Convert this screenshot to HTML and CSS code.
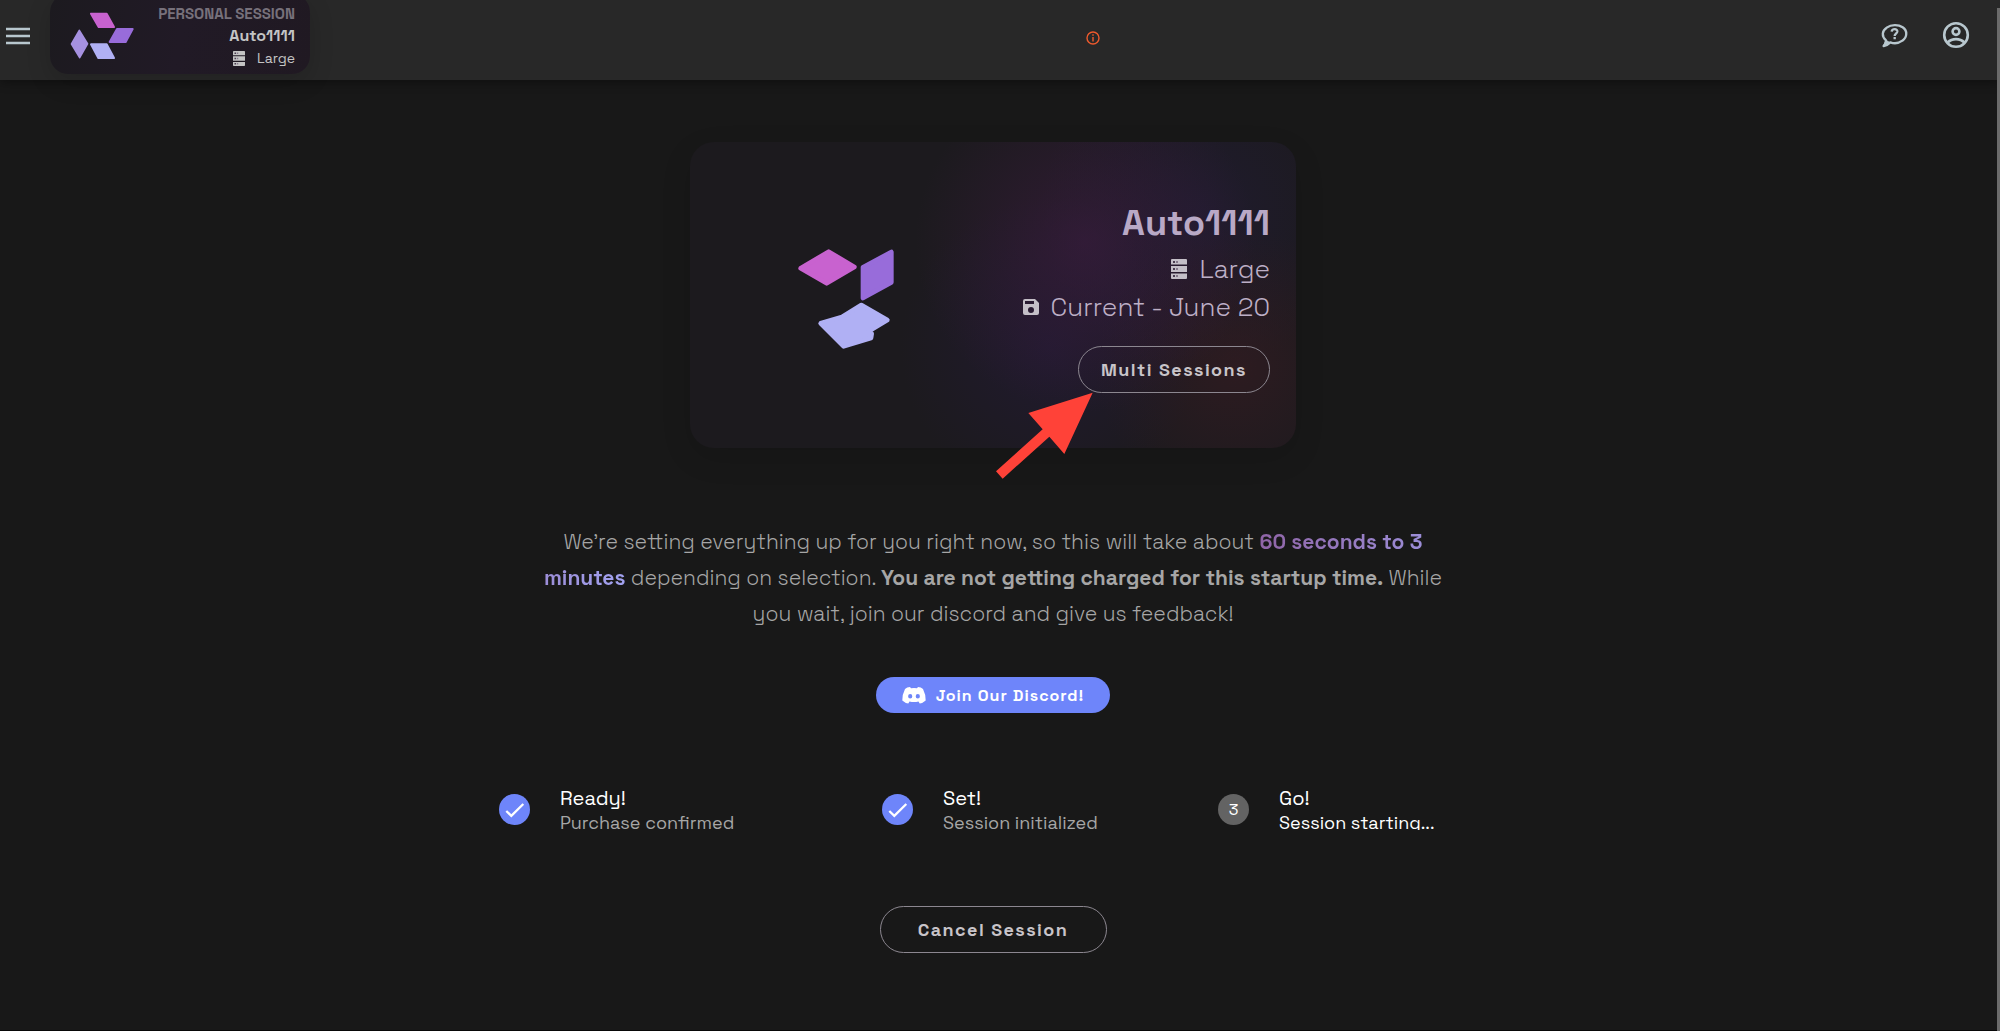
FILE: index.html
```html
<!DOCTYPE html>
<html lang="en">
<head>
<meta charset="utf-8">
<title>Session starting</title>
<link rel="stylesheet" href="styles.css">
</head>
<body>
<svg class="symbols" aria-hidden="true">
  <symbol id="server" viewBox="0 0 16 20">
    <path fill="currentColor" d="M1 0h14a1 1 0 0 1 1 1v4.500H0V1a1 1 0 0 1 1-1zM0 7h16v6H0zM0 14.500h16V19a1 1 0 0 1-1 1H1a1 1 0 0 1-1-1z"/>
    <path fill="#4a3d50" d="M2 2h2v2H2zM2 9h2v2H2zM2 16h2v2H2z"/>
    <path fill="#85798a" d="M5 2h2v2H5zM5 9h2v2H5zM5 16h2v2H5z"/>
  </symbol>
  <symbol id="check" viewBox="0 0 31 31">
    <circle cx="15.500" cy="15.500" r="15.500" fill="#6e85fa"/>
    <path d="M7.300 17l5 4.800L24.300 10" fill="none" stroke="#fff" stroke-width="2.300"/>
  </symbol>
</svg>

<header class="topbar">
  <div class="topbar-start">
    <button class="icon-button" type="button" aria-label="Menu">
      <svg width="24" height="18" viewBox="0 0 24 18"><path d="M0 2h24M0 9h24M0 16h24" stroke="#b8c7ce" stroke-width="2.600"/></svg>
    </button>
    <section class="session-chip">
      <svg class="chip-logo" width="65" height="48" viewBox="210 36 195 144" stroke-width="6" stroke-linejoin="round">
        <path d="M273 41H320L342 81H296Z" fill="#c862cf" stroke="#c862cf"/>
        <path d="M351 87H398L377 126H329Z" fill="#986cda" stroke="#986cda"/>
        <path d="M273 133H320L342 174H295Z" fill="#b0b0f4" stroke="#b0b0f4"/>
        <path d="M238 92L262 131L239 172L215 132Z" fill="#a691e0" stroke="#a691e0"/>
      </svg>
      <div class="chip-text">
        <span class="chip-label">PERSONAL SESSION</span>
        <strong class="chip-name">Auto1111</strong>
        <span class="chip-size"><svg width="12" height="15"><use href="#server"/></svg>Large</span>
      </div>
    </section>
  </div>
  <button class="icon-button notice-button" type="button" aria-label="Session notice">
    <svg width="14" height="14" viewBox="0 0 14 14"><circle cx="7" cy="7" r="6" fill="none" stroke="#ee5a2d" stroke-width="1.400"/><path d="M7 3.200v1.500M7 6v4.600" stroke="#ee5a2d" stroke-width="1.400"/></svg>
  </button>
  <div class="topbar-end">
    <button class="icon-button" type="button" aria-label="Help">
      <svg width="28" height="26" viewBox="63 66 84 78" fill="none" stroke="#b8c7ce">
        <path d="M78 121C64 109 66 92 80 83C94 73 115 73 128 82C143 92 142 112 127 122C116 130 101 131 91 127C86 132 80 136 71 138C77 133 80 127 78 121Z" stroke-width="7" stroke-linejoin="round"/>
        <path d="M77 121L90 128L70 139Z" fill="#b8c7ce" stroke-width="3"/>
        <path d="M95 95C96 85 113 85 112 95C111 101 104 101 104 108M104 111V118" stroke-width="7"/>
      </svg>
    </button>
    <button class="icon-button" type="button" aria-label="Account">
      <svg width="28" height="28" viewBox="0 0 28 28" fill="none" stroke="#b8c7ce" stroke-width="2.600"><circle cx="14" cy="14" r="11.800"/><circle cx="14" cy="10.500" r="3.400"/><path d="M5.700 21.500C10 17 18 17 22.300 21.500"/></svg>
    </button>
  </div>
</header>

<main class="content">
  <section class="session-card">
    <div class="card-art">
      <svg width="97" height="102" viewBox="354 354 291 306" stroke-width="14" stroke-linejoin="round">
        <path d="M446 365L523 411L440 460L362 415Z" fill="#c862cf" stroke="#c862cf"/>
        <path d="M634 366V457L549 504V412Z" fill="#986cda" stroke="#986cda"/>
        <path d="M544 525L622 570L566 604L575 611L573 624L491 649L422 580L486 561Z" fill="#b0b0f4" stroke="#b0b0f4"/>
      </svg>
    </div>
    <div class="card-text">
      <h1 class="card-title">Auto1111</h1>
      <p class="card-line"><svg width="16" height="20"><use href="#server"/></svg>Large</p>
      <p class="card-line"><svg width="16" height="16" viewBox="0 0 16 16"><path fill="currentColor" fill-rule="evenodd" d="M2 0h10l4 4v10a2 2 0 0 1-2 2H2a2 2 0 0 1-2-2V2a2 2 0 0 1 2-2zM2 2v3h9V2zM8 8a3 3 0 1 0 0 6a3 3 0 0 0 0-6z"/></svg>Current - June 20</p>
      <button class="outline-button" type="button">Multi Sessions</button>
    </div>
    <svg class="pointer-arrow" width="100" height="90" viewBox="0 0 300 270" aria-hidden="true"><path fill="#ff4238" d="M296 8L103 69L146 118L6 244L26 266L166 140L211 192Z"/></svg>
  </section>

  <p class="message">We’re setting everything up for you right now, so this will take about <strong class="duration">60 seconds to 3 minutes</strong> depending on selection. <strong>You are not getting charged for this startup time.</strong> While you wait, join our discord and give us feedback!</p>

  <a class="discord-button" href="#discord">
    <svg width="24" height="18" viewBox="0 0 24 18"><path fill="#fff" fill-rule="evenodd" d="M8 1L9 2.200Q12 1.600 15 2.200L16 1Q19 1.200 21 3Q24 9 23.700 14.500Q21 17 17.700 17.500L16.500 15.500Q12 16.600 7.500 15.500L6.300 17.500Q3 17 .3 14.500Q0 9 3 3Q5 1.200 8 1ZM8.200 8a2.100 2.300 0 1 0 0 4.600a2.100 2.300 0 0 0 0-4.600zM15.800 8a2.100 2.300 0 1 0 0 4.600a2.100 2.300 0 0 0 0-4.600z"/></svg>
    Join Our Discord!
  </a>

  <ol class="steps">
    <li class="step">
      <svg width="31" height="31"><use href="#check"/></svg>
      <div class="step-text"><h2 class="step-title">Ready!</h2><p class="step-note">Purchase confirmed</p></div>
    </li>
    <li class="step">
      <svg width="31" height="31"><use href="#check"/></svg>
      <div class="step-text"><h2 class="step-title">Set!</h2><p class="step-note">Session initialized</p></div>
    </li>
    <li class="step">
      <span class="step-number">3</span>
      <div class="step-text"><h2 class="step-title">Go!</h2><p class="step-note step-note-active">Session starting...</p></div>
    </li>
  </ol>

  <button class="outline-button cancel-button" type="button">Cancel Session</button>
</main>
<div class="scroll-thumb"></div>
</body>
</html>
```
FILE: styles.css
```css
* {
  box-sizing: border-box;
}

body {
  margin: 0;
  min-height: 100vh;
  background: #181818;
  border-bottom: 1px solid #080808;
  color: #c4c4c4;
  font-family: "Space Grotesk", Inter, "Liberation Sans", sans-serif;
}

h1, h2, p, ol {
  margin: 0;
  padding: 0;
}

strong {
  font-weight: 700;
}

svg {
  display: block;
  flex: none;
}

.symbols {
  position: absolute;
  width: 0;
  height: 0;
}

button {
  font-family: inherit;
  cursor: pointer;
}

.icon-button {
  padding: 0;
  border: 0;
  background: none;
}

.topbar {
  display: flex;
  justify-content: space-between;
  align-items: center;
  height: 80px;
  padding: 0 30px 0 6px;
  background: #282828;
  box-shadow: 0 2px 10px rgba(0, 0, 0, 0.4);
}

.topbar-start {
  display: flex;
  align-items: center;
  gap: 20px;
  height: 80px;
  padding-bottom: 9px;
}

.session-chip {
  display: flex;
  justify-content: space-between;
  width: 260px;
  height: 80px;
  margin-top: -3px;
  padding: 9px 15px 0 20px;
  border-radius: 18px;
  background: linear-gradient(100deg, #1c1a1f, #211a26 50%, #201922);
  box-shadow: 0 8px 24px rgba(0, 0, 0, 0.15);
}

.chip-logo {
  margin-top: 9px;
}

.chip-text {
  display: flex;
  flex-direction: column;
  align-items: flex-end;
  line-height: 22px;
}

.chip-label {
  color: #77717b;
  font-size: 15px;
  font-weight: 700;
}

.chip-name {
  font-size: 16px;
}

.chip-size {
  display: flex;
  align-items: center;
  gap: 12px;
  font-size: 14px;
}

.notice-button {
  padding: 0 6px 4px 0;
}

.topbar-end {
  display: flex;
  align-items: center;
  gap: 33px;
  padding-bottom: 10px;
}

.content {
  display: flex;
  flex-direction: column;
  align-items: center;
  padding: 62px 14px 75px 0;
}

.session-card {
  position: relative;
  display: grid;
  grid-template-columns: 312px 1fr;
  align-items: center;
  width: 606px;
  max-width: 100%;
  min-height: 306px;
  padding-right: 26px;
  border-radius: 24px;
  background:
    radial-gradient(circle at 395px 100px, rgba(62, 28, 66, 0.6), transparent 170px),
    radial-gradient(circle at 360px 205px, rgba(36, 26, 58, 0.6), transparent 150px),
    radial-gradient(circle at 545px 225px, rgba(56, 28, 34, 0.6), transparent 140px),
    radial-gradient(circle at 510px 70px, rgba(33, 28, 52, 0.7), transparent 160px),
    #1c1a1e;
  box-shadow: 0 10px 30px rgba(0, 0, 0, 0.12);
}

.card-art {
  display: flex;
  justify-content: center;
  padding-top: 8px;
}

.card-text {
  display: flex;
  flex-direction: column;
  align-items: flex-end;
}

.card-title {
  margin-bottom: 2px;
  color: #b9a9c6;
  font-size: 36px;
  line-height: 50px;
}

.card-line {
  display: flex;
  align-items: center;
  gap: 12px;
  color: #bdafc6;
  font-size: 26px;
  font-weight: 300;
  line-height: 38px;
  white-space: nowrap;
}

.card-line svg {
  color: #c4bfc7;
}

.outline-button {
  height: 47px;
  padding: 0 20px;
  border: 1px solid #8c8790;
  border-radius: 24px;
  background: none;
  color: #c8c4c9;
  font-size: 18px;
  font-weight: 700;
  letter-spacing: 0.08em;
}

.card-text .outline-button {
  min-width: 192px;
  margin-top: 20px;
}

.cancel-button {
  min-width: 227px;
}

.pointer-arrow {
  position: absolute;
  left: 304px;
  top: 248px;
}

.message {
  max-width: 900px;
  margin-top: 76px;
  color: #a6a6a6;
  font-size: 21px;
  font-weight: 300;
  line-height: 36px;
  text-align: center;
}

.duration {
  background: linear-gradient(90deg, #8f64a6, #a2a2f0);
  -webkit-background-clip: text;
  background-clip: text;
  color: transparent;
}

.discord-button {
  display: flex;
  justify-content: center;
  align-items: center;
  gap: 10px;
  min-width: 234px;
  height: 36px;
  margin-top: 45px;
  border-radius: 18px;
  background: #6e85fa;
  color: #fff;
  font-size: 16px;
  font-weight: 700;
  letter-spacing: 1px;
  text-decoration: none;
}

.steps {
  display: grid;
  grid-template-columns: 383fr 336fr 269fr;
  width: 988px;
  max-width: 100%;
  margin: 70px 0 71px;
  list-style: none;
}

.step {
  display: flex;
  align-items: center;
  gap: 30px;
}

.step-text {
  padding-top: 2px;
}

.step-title {
  color: #fff;
  font-size: 20px;
  font-weight: 400;
  line-height: 26px;
}

.step-note {
  color: #a6a6a6;
  font-size: 18px;
  line-height: 24px;
}

.step-note-active {
  height: 19px;
  margin-bottom: 5px;
  overflow: hidden;
  color: #fff;
}

.step-number {
  width: 31px;
  height: 31px;
  border-radius: 50%;
  background: #636363;
  color: #fff;
  font-size: 16px;
  line-height: 31px;
  text-align: center;
}

.scroll-thumb {
  position: fixed;
  top: 8px;
  right: 0;
  bottom: 0;
  width: 3px;
  background: #6b6b6b;
}
```
